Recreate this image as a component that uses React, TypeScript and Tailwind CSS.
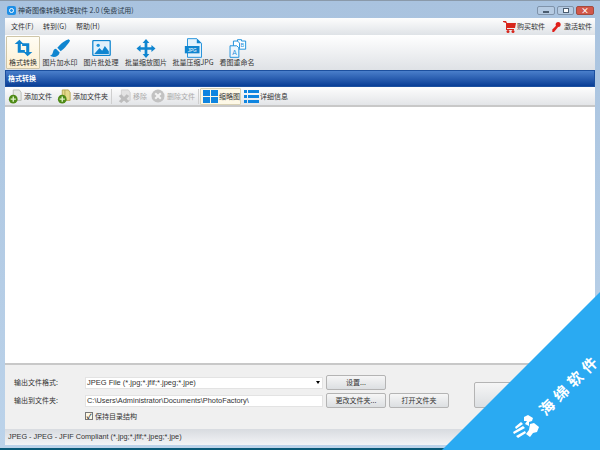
import type { ReactNode } from "react";

const font = "font-['Noto_Sans_CJK_SC','Liberation_Sans',sans-serif]";

// Icônes de la barre principale
function ConvertIcon() {
  return (
    <svg width="19" height="18" viewBox="0 0 28 26" fill="#0f85d0">
      <path d="M8 0 L1 6 L5.5 6 L5.5 19 L16 19 L16 15 L10 15 L10 6 L14 6 Z" transform="translate(0 1)" />
      <path d="M20 25 L27 19 L22.5 19 L22.5 6 L12 6 L12 10 L18 10 L18 19 L14 19 Z" />
    </svg>
  );
}

function BrushIcon() {
  return (
    <svg width="20" height="19" viewBox="0 0 30 28" fill="#0f85d0">
      <path d="M28 0 C24 1 15 7 11 13 L16 18 C22 14 29 5 30 2 Z" />
      <path d="M9 14.5 C4 15 5 21 3 23 C2 24 1 24.5 0 25 C5 28 13 27 14.5 20 Z" />
    </svg>
  );
}

function PictureIcon() {
  return (
    <svg width="19" height="16" viewBox="0 0 28 24">
      <rect x="1" y="1" width="26" height="22" rx="1" fill="#fff" stroke="#0f85d0" strokeWidth="2" />
      <rect x="3" y="3" width="22" height="18" fill="#dff0fb" />
      <circle cx="9" cy="8" r="2.5" fill="#1b92dd" />
      <path d="M3 21 L11 12 L15 16 L19 9 L25 17 L25 21 Z" fill="#0f85d0" />
    </svg>
  );
}

function MoveIcon() {
  return (
    <svg width="20" height="19" viewBox="0 0 28 28" fill="#0f85d0">
      <path d="M14 0 L19 6 L16 6 L16 12 L22 12 L22 9 L28 14 L22 19 L22 16 L16 16 L16 22 L19 22 L14 28 L9 22 L12 22 L12 16 L6 16 L6 19 L0 14 L6 9 L6 12 L12 12 L12 6 L9 6 Z" />
    </svg>
  );
}

function JpgIcon() {
  return (
    <svg width="19" height="20" viewBox="0 0 28 30">
      <path d="M5 1 L19 1 L26 8 L26 29 L5 29 Z" fill="#e3f2fc" stroke="#2a95dc" strokeWidth="1.5" />
      <path d="M19 1 L19 8 L26 8 Z" fill="#0f85d0" />
      <rect x="1" y="12" width="22" height="11" fill="#0f85d0" />
      <text x="12" y="20.5" fontSize="7" textAnchor="middle" fill="#fff" fontFamily="Liberation Sans">JPG</text>
    </svg>
  );
}

function RenameIcon() {
  return (
    <svg width="19" height="19" viewBox="0 0 28 28" fill="none" stroke="#1b8fdb" strokeWidth="1.4">
      <path d="M14 1 L20 1 L20 3 L26 3 L26 15 L14 15 Z" fill="#fff" />
      <path d="M8 3 L14 3 L17 6 L17 14 L8 14 Z" fill="#fff" />
      <path d="M3 10 L13 10 L16 13 L16 27 L3 27 Z" fill="#eef7fd" />
      <text x="9.5" y="23" fontSize="10" textAnchor="middle" fill="#1b8fdb" stroke="none" fontFamily="Liberation Sans">A</text>
      <text x="21" y="12" fontSize="8" textAnchor="middle" fill="#1b8fdb" stroke="none" fontFamily="Liberation Sans">B</text>
    </svg>
  );
}

// Icônes de la barre secondaire
function FileAddIcon({ folder = false }: { folder?: boolean }) {
  return (
    <svg width="14" height="15" viewBox="0 0 16 17">
      <path d="M6 1 L13 1 L15 4 L15 13 L6 13 Z" fill={folder ? "#e4d98a" : "#e6e8e4"} stroke={folder ? "#b3a552" : "#b5b9b2"} />
      {folder && <path d="M9 1 L9 12" stroke="#b3a552" />}
      <circle cx="6" cy="11.5" r="5" fill="#4e8a16" />
      <path d="M6 8.5 L6 14.5 M3 11.5 L9 11.5" stroke="#dff2c8" strokeWidth="1.6" />
    </svg>
  );
}

function RemoveIcon() {
  return (
    <svg width="14" height="15" viewBox="0 0 16 17">
      <path d="M5 1 L13 1 L15 4 L15 13 L5 13 Z" fill="#e3e3e3" stroke="#cfcfcf" />
      <path d="M2 8 L5 6 L8 9 L11 6 L14 8 L11 11 L14 14 L11 16 L8 13 L5 16 L2 14 L5 11 Z" fill="#bdbdbd" />
    </svg>
  );
}

function DeleteIcon() {
  return (
    <svg width="14" height="14" viewBox="0 0 15 15">
      <circle cx="7.5" cy="7.5" r="7" fill="#c2c2c2" />
      <path d="M4.5 4.5 L10.5 10.5 M10.5 4.5 L4.5 10.5" stroke="#f3f3f3" strokeWidth="2.2" />
    </svg>
  );
}

function GridIcon() {
  return (
    <svg width="15" height="13" viewBox="0 0 15 13" fill="#0f85e0">
      <rect x="0" y="0" width="7" height="6" />
      <rect x="8" y="0" width="7" height="6" />
      <rect x="0" y="7" width="7" height="6" />
      <rect x="8" y="7" width="7" height="6" />
    </svg>
  );
}

function ListIcon() {
  return (
    <svg width="15" height="13" viewBox="0 0 15 13" fill="#0f85e0">
      <rect x="0" y="0" width="3" height="3" />
      <rect x="4" y="0" width="11" height="3" />
      <rect x="0" y="5" width="3" height="3" />
      <rect x="4" y="5" width="11" height="3" />
      <rect x="0" y="10" width="3" height="3" />
      <rect x="4" y="10" width="11" height="3" />
    </svg>
  );
}

function ToolButton({ icon, label, active = false, width }: { icon: ReactNode; label: string; active?: boolean; width: string }) {
  return (
    <div
      className={`flex h-[33px] flex-col items-center pt-px ${width} ${
        active ? "rounded-[1px] border border-[#cfc6a8] bg-gradient-to-b from-[#fffdf4] to-[#fdf0d2]" : "border border-transparent"
      }`}
    >
      <div className="flex h-[20px] items-center">{icon}</div>
      <span className="text-[7px] leading-[9px] whitespace-nowrap text-[#333]">{label}</span>
    </div>
  );
}

function SubButton({ icon, label, muted = false }: { icon: ReactNode; label: string; muted?: boolean }) {
  return (
    <div className="flex items-center gap-[2px]">
      {icon}
      <span className={`text-[7px] whitespace-nowrap ${muted ? "text-[#aaa]" : "text-[#333]"}`}>{label}</span>
    </div>
  );
}

function PlainButton({ label }: { label: string }) {
  return (
    <div className="ml-[3px] flex h-[15px] w-[60px] items-center justify-center rounded-[2px] border border-[#b4b4b4] bg-gradient-to-b from-[#f6f6f6] to-[#dcdfe2] text-[7px] text-[#333]">
      {label}
    </div>
  );
}

export default function App() {
  return (
    <div className={`relative flex h-[450px] w-[600px] flex-col overflow-hidden bg-gradient-to-b from-[#a9c3df] to-[#bcd3ea] ${font}`}>
      {/* Barre de titre */}
      <div className="flex h-[18px] shrink-0 items-center border-t border-[#8a9aaa] pt-[2px] pl-[7px]">
        <div className="flex h-[9px] w-[9px] items-center justify-center rounded-[2px] bg-[#1e8fe6]">
          <div className="h-[5px] w-[5px] rounded-full border border-white" />
        </div>
        <span className="ml-[2px] text-[7px] text-[#2b3a4a]">神奇图像转换处理软件 2.0 (免费试用)</span>
        <div className="mr-[6px] ml-auto flex gap-[2px]">
          <div className="flex h-[9px] w-[18px] items-end justify-center rounded-[2px] border border-[#7f93aa] bg-[#b6cbe2] pb-px">
            <div className="h-[2px] w-[6px] border border-[#4b5d70] bg-white" />
          </div>
          <div className="flex h-[9px] w-[17px] items-center justify-center rounded-[2px] border border-[#7f93aa] bg-[#b6cbe2]">
            <div className="h-[5px] w-[6px] border border-[#4b5d70] bg-white" />
          </div>
          <div className="flex h-[9px] w-[18px] items-center justify-center rounded-[2px] border border-[#a34b3e] bg-[#d2574a] text-[8px] leading-none font-bold text-white">
            ×
          </div>
        </div>
      </div>

      <div className="mx-[5px] flex min-h-0 flex-1 flex-col">
        {/* Menu */}
        <div className="flex h-[17px] shrink-0 items-center bg-gradient-to-b from-[#fdfdfd] to-[#dfe3e7] pl-[6px] text-[7px] text-[#333]">
          <div className="flex gap-[10px]">
            <span className="w-[22px] whitespace-nowrap">文件(F)</span>
            <span className="w-[23px] whitespace-nowrap">转到(G)</span>
            <span className="w-[24px] whitespace-nowrap">帮助(H)</span>
          </div>
          <div className="mr-[3px] ml-auto flex items-center gap-[7px]">
            <div className="flex items-center gap-[1px]">
              <svg width="13" height="13" viewBox="0 0 13 13" fill="#d8261c">
                <path d="M0 1 L3 1 L4 3 L13 3 L12 8 L4 8 L4 9 L11 9 L11 10 L3 10 L3 3 L0 2 Z" />
                <circle cx="5" cy="11.5" r="1.5" />
                <circle cx="10" cy="11.5" r="1.5" />
              </svg>
              <span>购买软件</span>
            </div>
            <div className="flex items-center gap-[3px]">
              <svg width="9" height="10" viewBox="0 0 10 12" fill="#e0201b">
                <circle cx="7" cy="3" r="3" />
                <path d="M5 4 L7 6 L2 12 L0 12 L0 9 Z" />
              </svg>
              <span>激活软件</span>
            </div>
          </div>
        </div>

        {/* Barre d'outils principale */}
        <div className="flex h-[35px] shrink-0 items-start bg-gradient-to-b from-[#ffffff] to-[#dfe2e6] pt-px pl-px">
          <ToolButton active width="w-[34px]" icon={<ConvertIcon />} label="格式转换" />
          <ToolButton width="w-[40px]" icon={<BrushIcon />} label="图片加水印" />
          <ToolButton width="w-[42px]" icon={<PictureIcon />} label="图片批处理" />
          <ToolButton width="w-[48px]" icon={<MoveIcon />} label="批量缩放图片" />
          <ToolButton width="w-[46px]" icon={<JpgIcon />} label="批量压缩JPG" />
          <ToolButton width="w-[42px]" icon={<RenameIcon />} label="看图重命名" />
        </div>

        {/* Bandeau bleu */}
        <div className="flex h-[17px] shrink-0 items-center border border-[#1b4f9e] bg-gradient-to-b from-[#4a7fcb] to-[#083e96] pl-[2px] text-[7px] font-bold text-white">
          格式转换
        </div>

        {/* Barre secondaire */}
        <div className="flex h-[18px] shrink-0 items-center bg-gradient-to-b from-[#fdfdfd] to-[#e3e5e8] pl-[3px]">
          <div className="flex items-center gap-[5px]">
            <SubButton icon={<FileAddIcon />} label="添加文件" />
            <SubButton icon={<FileAddIcon folder />} label="添加文件夹" />
          </div>
          <div className="mr-[5px] ml-[3px] h-[15px] w-px bg-[#cfcfcf]" />
          <div className="flex items-center gap-[4px]">
            <SubButton muted icon={<RemoveIcon />} label="移除" />
            <SubButton muted icon={<DeleteIcon />} label="删除文件" />
          </div>
          <div className="mr-px ml-[3px] h-[15px] w-px bg-[#cfcfcf]" />
          <div className="flex h-[17px] items-center gap-px rounded-[1px] border border-[#d9d2b6] bg-[#fdf8e6] pl-[2px]">
            <GridIcon />
            <span className="text-[7px] text-[#333]">缩略图</span>
          </div>
          <div className="ml-[3px] flex items-center gap-px">
            <ListIcon />
            <span className="text-[7px] text-[#333]">详细信息</span>
          </div>
        </div>

        {/* Liste des fichiers */}
        <div className="min-h-0 flex-1 border-y-2 border-[#c8c8c8] bg-white" />

        {/* Panneau de sortie */}
        <div className="flex h-[64px] shrink-0 bg-[#f0f0f0] pt-[10px] pl-[9px] text-[7px] text-[#333]">
          <div className="flex w-[435px] flex-col gap-[3px]">
            <div className="flex h-[15px] items-center">
              <span className="w-[71px]">输出文件格式:</span>
              <div className="flex h-[12px] w-[238px] items-center justify-between border border-[#e3e3e3] bg-white pr-[2px] pl-[1px]">
                <span className="font-['Liberation_Sans'] text-[7.5px]">JPEG File (*.jpg;*.jfif;*.jpeg;*.jpe)</span>
                <div className="h-0 w-0 border-x-[2px] border-t-[3px] border-x-transparent border-t-black" />
              </div>
              <PlainButton label="设置..." />
            </div>
            <div className="flex h-[15px] items-center">
              <span className="w-[71px]">输出到文件夹:</span>
              <div className="flex h-[12px] w-[238px] items-center border border-[#e3e3e3] bg-white pl-[1px]">
                <span className="font-['Liberation_Sans'] text-[7.4px]">C:\Users\Administrator\Documents\PhotoFactory\</span>
              </div>
              <PlainButton label="更改文件夹..." />
              <PlainButton label="打开文件夹" />
            </div>
            <div className="flex items-center pl-[71px]">
              <div className="flex h-[8px] w-[8px] items-center justify-center border border-[#777] bg-[#fdf8e6] text-[7px] leading-none font-bold">✓</div>
              <span className="ml-[2px]">保持目录结构</span>
            </div>
          </div>
          {/* Bouton de démarrage, recouvert par le bandeau */}
          <div className="mt-[7px] ml-[25px] h-[26px] w-[100px] rounded-[2px] border border-[#b4b4b4] bg-gradient-to-b from-[#f6f6f6] to-[#dcdfe2]" />
        </div>

        {/* Barre d'état */}
        <div className="flex h-[16px] shrink-0 items-center bg-gradient-to-b from-[#d8dbe0] to-[#f3f4f6] pl-[3px] font-['Liberation_Sans'] text-[7.3px] text-[#333]">
          JPEG - JPEG - JFIF Compliant (*.jpg;*.jfif;*.jpeg;*.jpe)
        </div>
      </div>
      <div className="h-[3px] shrink-0" />
      <div className="h-[2px] shrink-0 bg-[#0a5a78]" />

      {/* Filigrane */}
      <div className="absolute right-0 bottom-0 h-[158px] w-[158px] bg-[#2aaaf2] [clip-path:polygon(100%_0,100%_100%,0_100%)]" />
      <div className="absolute top-[378px] left-[530px] -rotate-45 text-[15px] leading-none font-bold whitespace-nowrap text-white">
        <span className="tracking-[5px]">海绵软</span>件
      </div>
      <svg className="absolute top-[414px] left-[512px]" width="28" height="26" viewBox="0 0 28 26" fill="#fff">
        <path d="M12 3 L16 1 L21 4 L20 7 L17 8 L17 12 L13 10 L15 7 L12 7 Z" />
        <path d="M18 10 L22 9 L27 13 L25 18 L21 19 L18 23 L14 20 L17 16 Z" />
        <path d="M9 8 L11 10 L4 15 L3 13 Z M11 12 L13 14 L2 20 L1 18 Z M13 17 L14 19 L6 24 L4 22 Z" />
      </svg>
    </div>
  );
}
